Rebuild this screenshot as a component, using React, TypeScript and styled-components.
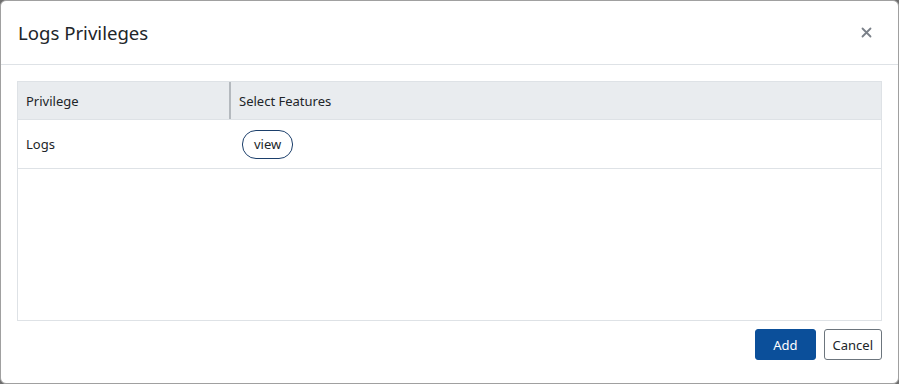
import React from "react";
import styled, { createGlobalStyle } from "styled-components";

const Global = createGlobalStyle`
  html, body { margin: 0; padding: 0; background: #6f6f6f; }
  body { font-family: "Segoe UI", "Noto Sans", "Open Sans", sans-serif; color: #212529; }
  * { box-sizing: border-box; }
`;

const Modal = styled.div`
  width: 899px;
  height: 384px;
  background: #fff;
  border: 1px solid #a0a0a0;
  border-radius: 6px;
  display: flex;
  flex-direction: column;
  overflow: hidden;
`;

const Header = styled.div`
  height: 64px;
  flex: none;
  display: flex;
  align-items: center;
  justify-content: space-between;
  padding: 0 26px 0 17px;
  border-bottom: 1px solid #dee2e6;
`;

const Title = styled.h5`
  margin: 0;
  font-size: 18.6px;
  font-weight: 400;
  line-height: 1.5;
  color: #212529;
`;

const Close = styled.button`
  border: none;
  background: transparent;
  padding: 0;
  width: 12px;
  height: 12px;
  display: flex;
  align-items: center;
  justify-content: center;
  cursor: pointer;
`;

const Body = styled.div`
  flex: 1;
  padding: 16px 16px 0 16px;
  display: flex;
  flex-direction: column;
`;

const TableBox = styled.div`
  height: 240px;
  border: 1px solid #dee2e6;
  display: flex;
  flex-direction: column;
`;

const Row = styled.div<{ $head?: boolean }>`
  display: grid;
  grid-template-columns: 213px 1fr;
  height: ${(p) => (p.$head ? "38px" : "49px")};
  background: ${(p) => (p.$head ? "#e9ecef" : "#fff")};
  border-bottom: 1px solid #dee2e6;
  font-size: 13px;
`;

const Cell = styled.div<{ $divider?: boolean }>`
  display: flex;
  align-items: center;
  padding-left: 8px;
  border-right: ${(p) => (p.$divider ? "2px solid #b4b9be" : "none")};
`;

const PillButton = styled.button`
  font-family: inherit;
  font-size: 13px;
  color: #212529;
  background: #fff;
  border: 1px solid #1c3f6b;
  border-radius: 14px;
  height: 29px;
  padding: 0 11px;
  margin-left: 3px;
  cursor: pointer;
`;

const Footer = styled.div`
  display: flex;
  justify-content: flex-end;
  gap: 8px;
  padding: 8px 16px 0 16px;
  height: 69px;
`;

const Btn = styled.button<{ $primary?: boolean }>`
  font-family: inherit;
  font-size: 13px;
  height: 31px;
  padding: 0 ${(p) => (p.$primary ? "17px" : "8px")};
  border-radius: 3px;
  border: 1px solid ${(p) => (p.$primary ? "#0b4f9a" : "#6c757d")};
  background: ${(p) => (p.$primary ? "#0b4f9a" : "#fff")};
  color: ${(p) => (p.$primary ? "#fff" : "#212529")};
  cursor: pointer;
`;

export default function App() {
  return (
    <>
      <Global />
      <Modal>
        <Header>
          <Title>Logs Privileges</Title>
          <Close aria-label="Close">
            <svg width="11" height="11" viewBox="0 0 11 11">
              <path d="M1.5 1.5 L9.5 9.5 M9.5 1.5 L1.5 9.5" stroke="#7a8088" strokeWidth="1.8" strokeLinecap="round" />
            </svg>
          </Close>
        </Header>
        <Body>
          <TableBox>
            <Row $head>
              <Cell $divider>Privilege</Cell>
              <Cell>Select Features</Cell>
            </Row>
            <Row>
              <Cell>Logs</Cell>
              <Cell>
                <PillButton>view</PillButton>
              </Cell>
            </Row>
          </TableBox>
        </Body>
        <Footer>
          <Btn $primary>Add</Btn>
          <Btn>Cancel</Btn>
        </Footer>
      </Modal>
    </>
  );
}
